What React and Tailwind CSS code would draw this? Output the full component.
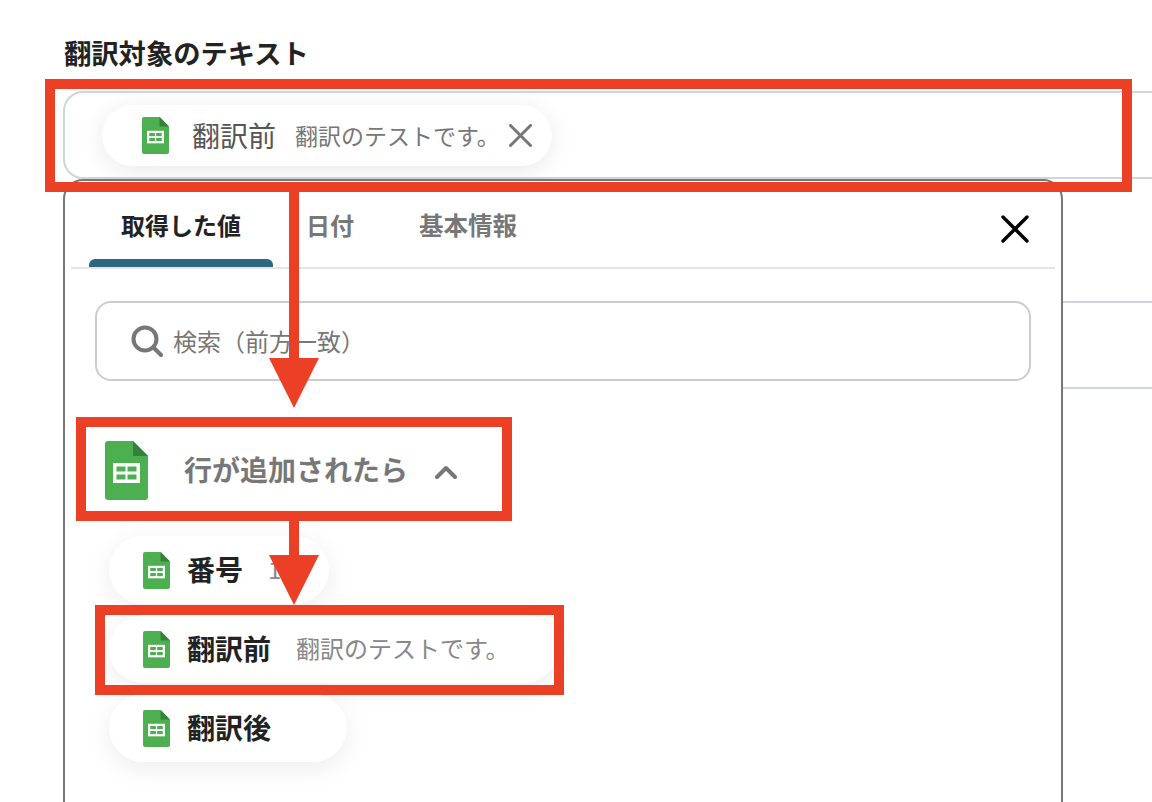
import React from 'react';

const FONT = 'font-["Noto_Sans_CJK_JP","Noto_Sans",sans-serif]';

const SheetsIcon = ({ className }) => (
  <svg viewBox="0 0 43 59" className={className}>
    <path d="M3 0H28L43 15V56a3 3 0 0 1-3 3H3a3 3 0 0 1-3-3V3a3 3 0 0 1 3-3Z" fill="#4caf50" />
    <path d="M28 0L43 15H28Z" fill="#35803a" />
    <rect x="8" y="22" width="27" height="20" fill="#fff" />
    <rect x="11.5" y="25.5" width="9" height="5" fill="#4caf50" />
    <rect x="22.5" y="25.5" width="9" height="5" fill="#4caf50" />
    <rect x="11.5" y="33.5" width="9" height="5" fill="#4caf50" />
    <rect x="22.5" y="33.5" width="9" height="5" fill="#4caf50" />
  </svg>
);

const ListChip = ({ name, value }) => (
  <div className="flex h-[68px] w-fit items-center rounded-full bg-white pl-[34px] pr-[48px] shadow-[0_6px_26px_rgba(0,0,0,0.08)]">
    <SheetsIcon className="h-[37px] w-[27px] shrink-0" />
    <span className="ml-[17px] pb-[2px] text-[28px] font-bold leading-8 text-[#222]">{name}</span>
    <span className="ml-[25px] min-w-[3px] pb-[2px] text-[24px] leading-8 text-[#888]">{value}</span>
  </div>
);

const Arrow = ({ className, height }) => (
  <svg viewBox={`0 0 50 ${height}`} className={className}>
    <rect x="20" y="0" width="10" height={height - 49} fill="#eb4026" />
    <path d={`M0 ${height - 50}H50L25 ${height}Z`} fill="#eb4026" />
  </svg>
);

export default function App() {
  return (
    <div className={`relative h-[802px] w-[1152px] overflow-hidden bg-white ${FONT}`}>
      <h2 className="ml-[64px] pt-[36px] text-[27.3px] font-bold leading-8 text-[#222]">翻訳対象のテキスト</h2>

      {/* text field, runs off the right edge */}
      <div className="ml-[63px] mt-[23px] h-[88px] w-[1200px] rounded-l-[20px] border-2 border-[#cfd5da] pl-[37px] pt-[12px]">
        <div className="flex h-[61px] w-[450px] items-center rounded-full bg-white pl-[40px] shadow-[0_4px_24px_rgba(0,0,0,0.09)]">
          <SheetsIcon className="h-[37px] w-[27px] shrink-0" />
          <span className="ml-[23px] pb-[2px] text-[28px] leading-8 text-[#555]">翻訳前</span>
          <span className="ml-[19px] pb-[2px] text-[23px] leading-8 text-[#777]">翻訳のテストです。</span>
          <svg viewBox="0 0 23 23" className="ml-[9px] h-[23px] w-[23px]">
            <path d="M1.5 1.5L21.5 21.5M21.5 1.5L1.5 21.5" stroke="#777" strokeWidth="3" strokeLinecap="round" />
          </svg>
        </div>
      </div>

      <div className="ml-[63px] flex">
        {/* picker panel */}
        <div className="h-[640px] w-[1000px] shrink-0 rounded-t-[20px] border-2 border-[#777] bg-white">
          <div className="mx-[6px] flex h-[88px] border-b-2 border-[#e5e5e5] pl-[18px]">
            <div className="flex w-[184px] flex-col items-center pt-[28px]">
              <span className="text-[24px] font-bold leading-8 text-[#222]">取得した値</span>
              <div className="mt-auto h-[8px] w-full rounded-t-[6px] bg-[#2d6680]" />
            </div>
            <span className="pl-[33px] pr-[32px] pt-[28px] text-[24px] font-bold leading-8 text-[#777]">日付</span>
            <span className="px-[33px] pt-[28px] text-[24.5px] font-bold leading-8 text-[#777]">基本情報</span>
            <svg viewBox="0 0 28 28" className="ml-auto mr-[26px] mt-[34px] h-[28px] w-[28px]">
              <path d="M2 2L26 26M26 2L2 26" stroke="#000" strokeWidth="3.4" strokeLinecap="round" />
            </svg>
          </div>

          <div className="px-[30px]">
            <div className="mt-[32px] flex h-[80px] w-[936px] items-center rounded-[16px] border-2 border-[#ccc] pl-[34px]">
              <svg viewBox="0 0 32 32" className="h-[32px] w-[32px] shrink-0">
                <circle cx="14" cy="14" r="11.5" fill="none" stroke="#777" strokeWidth="4" />
                <path d="M22.5 22.5L30 30" stroke="#777" strokeWidth="4" strokeLinecap="round" />
              </svg>
              <span className="ml-[10px] text-[24px] leading-8 text-[#777]">検索（前方一致）</span>
            </div>

            <div className="ml-[10px] mt-[60px] flex items-center">
              <SheetsIcon className="h-[59px] w-[43px] shrink-0" />
              <span className="ml-[36px] pb-[3px] text-[28px] font-bold leading-8 text-[#777]">行が追加されたら</span>
              <svg viewBox="0 0 22 14" className="ml-[27px] mt-[3px] h-[14px] w-[22px]">
                <path d="M2 12L11 3L20 12" fill="none" stroke="#777" strokeWidth="4" strokeLinecap="round" strokeLinejoin="round" />
              </svg>
            </div>

            <div className="ml-[14px] mt-[36px] flex flex-col gap-[11px]">
              <ListChip name="番号" value="1" />
              <ListChip name="翻訳前" value="翻訳のテストです。" />
              <ListChip name="翻訳後" value="" />
            </div>
          </div>
        </div>

        {/* next field, mostly hidden behind the panel */}
        <div className="mt-[122px] h-[88px] flex-1 border-y-2 border-[#cfd5da]" />
      </div>

      {/* red annotations */}
      <div className="absolute left-[45px] top-[79px] h-[113px] w-[1087px] border-[10px] border-[#eb4026]" />
      <div className="absolute left-[76px] top-[417px] h-[104px] w-[436px] border-[10px] border-[#eb4026]" />
      <div className="absolute left-[95px] top-[605px] h-[90px] w-[469px] border-[10px] border-[#eb4026]" />
      <Arrow className="absolute left-[269px] top-[191px] h-[217px] w-[50px]" height={217} />
      <Arrow className="absolute left-[269px] top-[521px] h-[84px] w-[50px]" height={84} />
    </div>
  );
}
